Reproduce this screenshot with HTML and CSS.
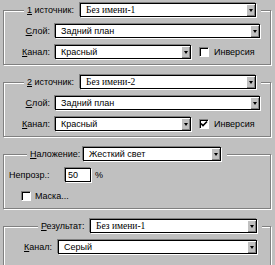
FILE: index.html
```html
<!DOCTYPE html>
<html lang="ru">
<head>
    <meta charset="UTF-8">
    <title>Внешний канал</title>
    <link rel="stylesheet" href="styles.css">
</head>
<body>
    <div class="dialog">
        <fieldset class="group">
            <legend class="groupHead headSource">
                <span class="headLabel"><u>1</u> источник:</span>
                <div class="combo comboDoc"><span class="comboValue doc">Без имени-1</span><span class="comboDrop"></span></div>
            </legend>
            <div class="groupBody">
                <div class="row">
                    <span class="label"><u>С</u>лой:</span>
                    <div class="combo comboWide"><span class="comboValue">Задний план</span><span class="comboDrop"></span></div>
                </div>
                <div class="row">
                    <span class="label"><u>К</u>анал:</span>
                    <div class="combo comboShort"><span class="comboValue">Красный</span><span class="comboDrop"></span></div>
                    <span class="check"></span>
                    <span class="checkText">Инверсия</span>
                </div>
            </div>
        </fieldset>

        <fieldset class="group">
            <legend class="groupHead headSource">
                <span class="headLabel"><u>2</u> источник:</span>
                <div class="combo comboDoc"><span class="comboValue doc">Без имени-2</span><span class="comboDrop"></span></div>
            </legend>
            <div class="groupBody">
                <div class="row">
                    <span class="label"><u>С</u>лой:</span>
                    <div class="combo comboWide"><span class="comboValue">Задний план</span><span class="comboDrop"></span></div>
                </div>
                <div class="row">
                    <span class="label"><u>К</u>анал:</span>
                    <div class="combo comboShort"><span class="comboValue">Красный</span><span class="comboDrop"></span></div>
                    <span class="check">
                        <svg width="8" height="8" viewBox="0 0 8 8"><path d="M1 3.5 L3 5.5 L7 1.5" fill="none" stroke="#000" stroke-width="1.6"/></svg>
                    </span>
                    <span class="checkText">Инверсия</span>
                </div>
            </div>
        </fieldset>

        <fieldset class="group">
            <legend class="groupHead headBlend">
                <span class="headLabel"><u>Н</u>аложение:</span>
                <div class="combo comboBlend"><span class="comboValue">Жесткий свет</span><span class="comboDrop"></span></div>
            </legend>
            <div class="groupBody">
                <div class="row rowOpacity">
                    <span class="opacityLabel">Непрозр.:</span>
                    <div class="field">50</div>
                    <span class="unit">%</span>
                </div>
                <div class="row rowMask">
                    <span class="check"></span>
                    <span class="checkText">Маска...</span>
                </div>
            </div>
        </fieldset>

        <fieldset class="group groupResult">
            <legend class="groupHead headResult">
                <span class="headLabel"><u>Р</u>езультат:</span>
                <div class="combo comboResult"><span class="comboValue doc">Без имени-1</span><span class="comboDrop"></span></div>
            </legend>
            <div class="groupBody">
                <div class="row">
                    <span class="label labelResult"><u>К</u>анал:</span>
                    <div class="combo comboResultWide"><span class="comboValue">Серый</span><span class="comboDrop"></span></div>
                </div>
            </div>
        </fieldset>
    </div>
</body>
</html>
```

FILE: styles.css
```css
html, body {
    margin: 0;
    height: 100%;
    overflow: hidden;
}

body {
    background-color: #c0c0c0;
    font-family: "Liberation Sans", Arial, sans-serif;
    font-size: 9px;
    color: #000;
}

.dialog {
    display: flex;
    flex-direction: column;
    gap: 10px;
    padding: 3px 4px 0 3px;
}

.group {
    margin: 0;
    padding: 7px 0 5px;
    min-width: 0;
    border: 1px solid #808080;
    box-shadow: inset 1px 1px 0 #fff, 1px 1px 0 #fff;
}

.groupResult {
    padding-bottom: 20px;
}

.groupHead {
    display: flex;
    align-items: center;
    height: 14px;
    padding: 0 5px 0 3px;
    background-color: #c0c0c0;
}

.headSource {
    margin-left: 20px;
}

.headSource .headLabel {
    width: 53px;
}

.headBlend {
    margin-left: 23px;
    padding-right: 6px;
}

.headBlend .headLabel {
    width: 53px;
}

.headResult {
    margin-left: 34px;
}

.headResult .headLabel {
    width: 49px;
}

.headLabel {
    white-space: nowrap;
    line-height: 12px;
}

.groupBody {
    display: flex;
    flex-direction: column;
    gap: 7px;
}

.row {
    display: flex;
    align-items: center;
    height: 14px;
}

.label {
    width: 46px;
    margin-right: 5px;
    text-align: right;
    white-space: nowrap;
}

.labelResult {
    width: 48px;
    margin-right: 6px;
}

/* combo boxes */
.combo {
    display: flex;
    height: 14px;
    box-sizing: border-box;
    background-color: #fff;
    border: 1px solid #000;
    box-shadow: -1px -1px 0 #808080, 1px 1px 0 #fff;
}

.comboValue {
    flex: 1;
    padding-left: 5px;
    line-height: 12px;
    white-space: nowrap;
    overflow: hidden;
}

.comboValue.doc {
    font-family: "Liberation Serif", "Times New Roman", serif;
    font-size: 9.5px;
}

.comboDrop {
    display: flex;
    align-items: center;
    justify-content: center;
    width: 9px;
    background-color: #c0c0c0;
    box-shadow: inset 1px 1px 0 #fff, inset -1px -1px 0 #808080;
}

.comboDrop::after {
    content: "";
    border-left: 2px solid transparent;
    border-right: 2px solid transparent;
    border-top: 3px solid #000;
}

.comboDoc {
    width: 176px;
}

.comboWide {
    width: 205px;
}

.comboShort {
    width: 136px;
}

.comboBlend {
    width: 138px;
}

.comboResult {
    width: 167px;
}

.comboResultWide {
    width: 199px;
}

/* checkboxes */
.check {
    display: flex;
    align-items: center;
    justify-content: center;
    width: 10px;
    height: 10px;
    box-sizing: border-box;
    background-color: #fff;
    border: 1px solid;
    border-color: #808080 #fff #fff #808080;
    box-shadow: inset 1px 1px 0 #000;
}

.row .comboShort + .check {
    margin-left: 8px;
}

.checkText {
    margin-left: 5px;
    white-space: nowrap;
}

/* opacity */
.rowOpacity {
    padding-left: 5px;
}

.opacityLabel {
    width: 56px;
}

.field {
    width: 26px;
    height: 14px;
    box-sizing: border-box;
    padding-left: 2px;
    line-height: 12px;
    background-color: #fff;
    border: 1px solid #000;
    box-shadow: -1px -1px 0 #808080, 1px 1px 0 #fff;
}

.unit {
    margin-left: 4px;
}

.rowMask {
    padding-left: 17px;
}

.rowMask .checkText {
    margin-left: 4px;
}
```
